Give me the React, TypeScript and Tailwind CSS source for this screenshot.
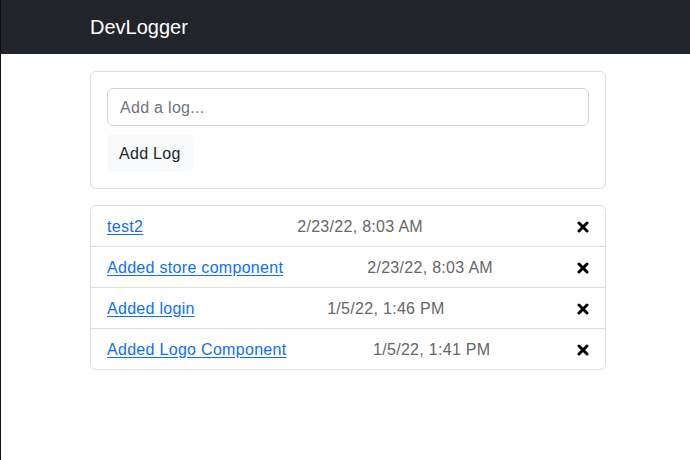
const logs = [
  { id: 1, text: "test2", date: "2/23/22, 8:03 AM" },
  { id: 2, text: "Added store component", date: "2/23/22, 8:03 AM" },
  { id: 3, text: "Added login", date: "1/5/22, 1:46 PM" },
  { id: 4, text: "Added Logo Component", date: "1/5/22, 1:41 PM" },
];

function TimesIcon() {
  return (
    <svg width="12" height="12" viewBox="0 0 12 12" aria-hidden="true">
      <path
        d="M2 2 L10 10 M10 2 L2 10"
        stroke="#000"
        strokeWidth="3"
        strokeLinecap="round"
      />
    </svg>
  );
}

export default function App() {
  return (
    <div
      className="min-h-screen h-[460px] bg-white border-l border-[#111] text-[#212529]"
      style={{ fontFamily: "'Liberation Sans', Arial, sans-serif" }}
    >
      <nav className="h-[54px] bg-[#212529] flex items-center">
        <div className="ml-[89px] text-[20px] text-white leading-none">DevLogger</div>
      </nav>

      <main className="ml-[89px] w-[516px] pt-[17px] tracking-[0.3px]">
        <div className="border border-[#dfdfdf] rounded-md p-4">
          <input
            type="text"
            placeholder="Add a log..."
            className="w-full h-[38px] px-3 pt-[2px] text-base tracking-[0.3px] border border-[#ced4da] rounded-md placeholder-[#6c757d] outline-none"
          />
          <button className="mt-2 h-[38px] px-3 pt-[2px] bg-[#f8f9fa] rounded-md text-base tracking-[0.3px] text-[#212529]">
            Add Log
          </button>
        </div>

        <ul className="mt-4 border border-[#dfdfdf] rounded-md">
          {logs.map((log, i) => (
            <li
              key={log.id}
              className={
                "flex items-center justify-between px-4 pt-[1px] text-base " +
                (i > 0 ? "h-[41px] border-t border-[#dfdfdf]" : "h-[40px]")
              }
            >
              <a href="#" className="text-[#0d6efd] underline underline-offset-2">
                {log.text}
              </a>
              <span className="text-[#666]">{log.date}</span>
              <TimesIcon />
            </li>
          ))}
        </ul>
      </main>
    </div>
  );
}
